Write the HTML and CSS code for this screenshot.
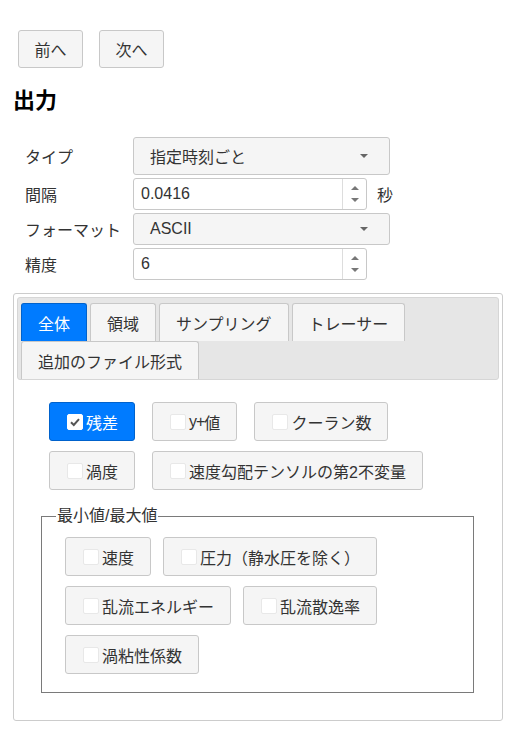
FILE: index.html
```html
<!DOCTYPE html>
<html lang="ja">
<head>
<meta charset="utf-8">
<link rel="stylesheet" href="styles.css">
</head>
<body>
<div class="nav">
  <button class="btn nav-btn">前へ</button>
  <button class="btn nav-btn">次へ</button>
</div>
<h2 class="title">出力</h2>
<div class="form">
  <div class="row row-select">
    <label class="lbl">タイプ</label>
    <div class="select sel-type"><span>指定時刻ごと</span><span class="caret"></span></div>
  </div>
  <div class="row row-num">
    <label class="lbl">間隔</label>
    <div class="num"><span class="num-val">0.0416</span><span class="spin"><span class="up"></span><span class="down"></span></span></div>
    <span class="unit">秒</span>
  </div>
  <div class="row row-num">
    <label class="lbl">フォーマット</label>
    <div class="select sel-fmt"><span>ASCII</span><span class="caret"></span></div>
  </div>
  <div class="row row-num">
    <label class="lbl">精度</label>
    <div class="num"><span class="num-val">6</span><span class="spin"><span class="up"></span><span class="down"></span></span></div>
  </div>
</div>
<div class="panel">
  <div class="tabs">
    <span class="tab active">全体</span>
    <span class="tab">領域</span>
    <span class="tab">サンプリング</span>
    <span class="tab">トレーサー</span>
    <span class="tab">追加のファイル形式</span>
  </div>
  <div class="content">
    <div class="chk-group">
      <span class="chk on"><span class="box"><svg width="12" height="12" viewBox="0 0 12 12"><path d="M2 6.2 L4.8 9 L10 3.2" fill="none" stroke="#555" stroke-width="2"/></svg></span>残差</span>
      <span class="chk"><span class="box"></span><span class="latin">y+</span>値</span>
      <span class="chk"><span class="box"></span>クーラン数</span>
      <span class="chk"><span class="box"></span>渦度</span>
      <span class="chk"><span class="box"></span>速度勾配テンソルの第2不変量</span>
    </div>
    <fieldset class="minmax">
      <legend>最小値/最大値</legend>
      <div class="chk-group inner">
        <span class="chk"><span class="box"></span>速度</span>
        <span class="chk"><span class="box"></span>圧力（静水圧を除く）</span>
        <span class="chk"><span class="box"></span>乱流エネルギー</span>
        <span class="chk"><span class="box"></span>乱流散逸率</span>
        <span class="chk"><span class="box"></span>渦粘性係数</span>
      </div>
    </fieldset>
  </div>
</div>
</body>
</html>
```
FILE: styles.css
```css
* { box-sizing: border-box; }
body {
  margin: 0;
  padding: 30px 0 0 0;
  font-family: "Liberation Sans", "Noto Sans CJK JP", sans-serif;
  font-size: 16px;
  color: #333;
  background: #fff;
}
.nav { display: flex; gap: 16px; padding-left: 18px; }
.btn {
  font: inherit;
  color: #333;
  background: #f5f5f5;
  border: 1px solid #c8c8c8;
  border-radius: 3px;
}
.nav-btn { width: 65px; height: 38px; padding: 0; }
.title {
  margin: 20px 0 0 13px;
  font-size: 22px;
  line-height: 26px;
  font-weight: bold;
  color: #000;
}
.form { margin-top: 23px; display: flex; flex-direction: column; gap: 3px; }
.row { display: flex; align-items: center; }
.row-select { height: 38px; }
.row-num { height: 32px; }
.lbl { width: 133px; padding-left: 25px; }
.select {
  width: 257px;
  height: 100%;
  background: #f5f5f5;
  border: 1px solid #c8c8c8;
  border-radius: 3px;
  display: flex;
  align-items: center;
  justify-content: space-between;
  padding: 0 21px 0 16px;
}
.caret {
  width: 0; height: 0;
  border-left: 4px solid transparent;
  border-right: 4px solid transparent;
  border-top: 4px solid #666;
}
.num {
  width: 234px;
  height: 100%;
  border: 1px solid #c8c8c8;
  border-radius: 3px;
  display: flex;
  background: #fff;
}
.num-val { flex: 1; padding-left: 7px; display: flex; align-items: center; }
.spin {
  width: 24px;
  border-left: 1px solid #ddd;
  display: flex;
  flex-direction: column;
  align-items: center;
  justify-content: space-around;
  padding: 3px 0;
}
.up, .down { width: 0; height: 0; border-left: 4px solid transparent; border-right: 4px solid transparent; }
.up { border-bottom: 4px solid #777; }
.down { border-top: 4px solid #777; }
.unit { margin-left: 10px; }
.panel {
  margin: 13px 13px 0 13px;
  width: 490px;
  height: 428px;
  border: 1px solid #ccc;
  border-radius: 3px;
  padding: 3px;
}
.tabs {
  background: #e6e6e6;
  border: 1px solid #d6d6d6;
  border-radius: 3px;
  padding: 5px 3px 0 3px;
  display: flex;
  flex-wrap: wrap;
  column-gap: 3px;
  row-gap: 0;
}
.tab {
  height: 38px;
  display: flex;
  align-items: center;
  padding: 0 16px;
  background: #f5f5f5;
  border: 1px solid #c8c8c8;
  border-bottom: none;
  border-radius: 3px 3px 0 0;
}
.tab.active { background: #007bff; border-color: #0062cc; color: #fff; }
.content { padding: 22px 0 0 32px; }
.chk-group { display: flex; flex-wrap: wrap; column-gap: 17px; row-gap: 10px; width: 400px; }
.chk {
  height: 39px;
  display: inline-flex;
  align-items: center;
  padding: 0 16px 0 17px;
  background: #f5f5f5;
  border: 1px solid #c8c8c8;
  border-radius: 3px;
  white-space: nowrap;
}
.chk .box {
  width: 16px; height: 16px;
  background: #fff;
  border: 1px solid #e8e8e8;
  border-radius: 2px;
  margin-right: 3px;
  display: inline-flex;
  align-items: center;
  justify-content: center;
}
.latin { letter-spacing: -1px; }
.chk.on { background: #007bff; border-color: #0062cc; color: #fff; }
.chk.on .box { border-color: #fff; }
.minmax {
  margin: 18px 0 0 -8px;
  width: 433px;
  height: 185px;
  border: 1px solid #7a7a7a;
  padding: 13px 10px 0 23px;
  min-width: 0;
}
.minmax legend { padding: 0 1px; margin-left: -9px; line-height: 16px; }
.chk-group.inner { width: 330px; column-gap: 12px; }
```
